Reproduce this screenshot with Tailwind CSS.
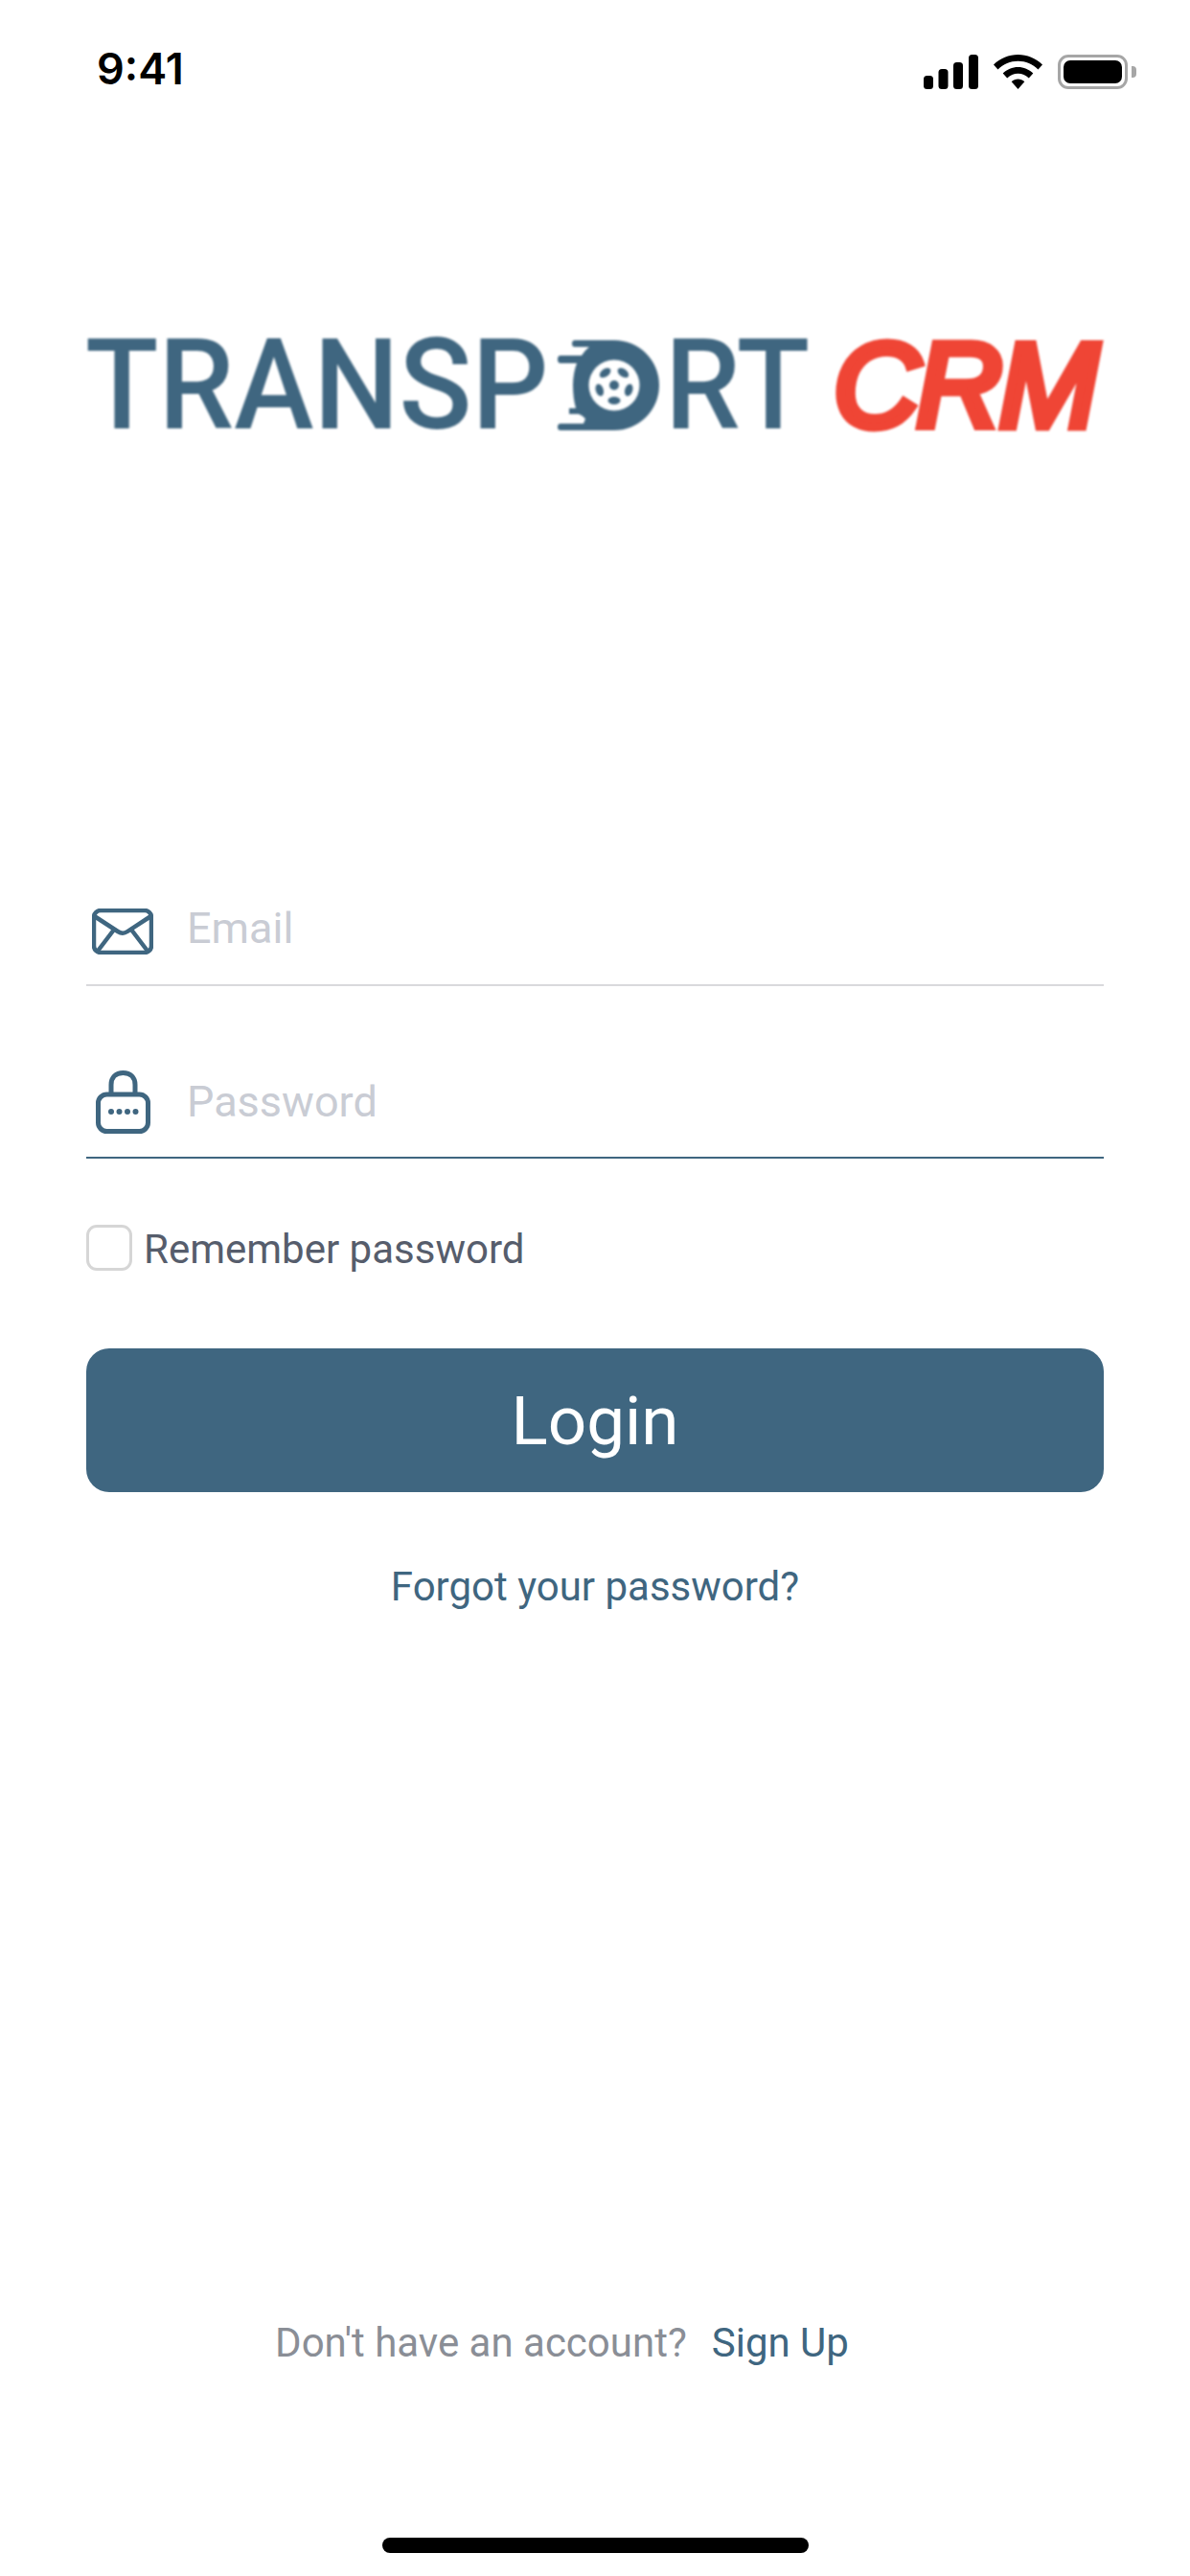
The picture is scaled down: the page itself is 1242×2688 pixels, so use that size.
<!DOCTYPE html>
<html lang="en">
<head>
    <meta charset="UTF-8">
    <meta name="viewport" content="width=device-width, initial-scale=1.0">
    <title>Transport CRM Login</title>
    <script src="https://cdn.jsdelivr.net/npm/@tailwindcss/browser@4"></script>
</head>
<body class="bg-white">
    <div class="w-[1242px] h-[2688px] flex flex-col font-['Roboto',sans-serif] overflow-hidden">

        <!-- Status bar -->
        <div class="h-[110px] flex items-start justify-between pl-[101px] pr-[56px] pt-[45px]">
            <span class="pt-[1px] text-[45px] leading-[52px] font-semibold text-black font-['Inter',sans-serif]">9:41</span>
            <div class="flex items-center gap-[16px] pt-[12px]">
                <svg width="57" height="36" viewBox="0 0 57 36" fill="#000">
                    <rect x="0" y="22" width="10" height="14" rx="3.500"/>
                    <rect x="15.500" y="15" width="10" height="21" rx="3.500"/>
                    <rect x="31" y="8" width="10" height="28" rx="3.500"/>
                    <rect x="47" y="0" width="10" height="36" rx="3.500"/>
                </svg>
                <svg width="51" height="36" viewBox="0 0 51 36" fill="#000">
                    <path d="M25.500 0C35 0 44 3.800 51 10.500L46.500 15.500C40.800 10 33.500 6.800 25.500 6.800C17.500 6.800 10.200 10 4.500 15.500L0 10.500C7 3.800 16 0 25.500 0Z"/>
                    <path d="M25.500 13C31.500 13 37 15.400 41.300 19.500L36.800 24.500C33.700 21.600 29.800 19.800 25.500 19.800C21.200 19.800 17.300 21.600 14.200 24.500L9.700 19.500C14 15.400 19.500 13 25.500 13Z"/>
                    <path d="M25.500 25.500C28 25.500 30.400 26.500 32.300 28.200L25.500 36L18.700 28.200C20.600 26.500 23 25.500 25.500 25.500Z"/>
                </svg>
                <div class="flex items-center">
                    <div class="w-[73px] h-[36px] rounded-[11px] border-[3px] border-[#a6a6a6] p-[3px]">
                        <div class="w-full h-full rounded-[7px] bg-black"></div>
                    </div>
                    <div class="ml-[4px] w-[5px] h-[12px] rounded-r-[4px] bg-[#a6a6a6]"></div>
                </div>
            </div>
        </div>

        <!-- Logo -->
        <div class="mt-[245px] ml-[89px] h-[94px] flex items-center blur-[1px]">
            <div class="w-[481px] h-[94px] flex items-center">
                <span class="origin-left scale-x-[.95] text-[132px] leading-[94px] font-medium text-[#3f6680] whitespace-nowrap">TRANSP</span>
            </div>
            <svg class="ml-[12px]" width="106" height="94" viewBox="0 0 106 94">
                <path fill="#3f6680" d="M18 0H59A47 47 0 0 1 59 94H3Q0 94 0 90.500Q0 87 3 87H27L29 82Q27 79 22 77H12V71H19Q16 60 16 47Q16 35 20 24H3Q0 24 0 20Q0 16 3 16H25Q29 10 33 7H18Q15 7 15 3.500Q15 0 18 0Z"/>
                <circle cx="59" cy="47" r="26.500" fill="#fff"/>
                <circle cx="59" cy="47" r="5" fill="#3f6680"/>
                <g fill="#3f6680">
                    <ellipse cx="59" cy="63" rx="6.500" ry="4"/>
                    <ellipse cx="59" cy="63" rx="6.500" ry="4" transform="rotate(72 59 47)"/>
                    <ellipse cx="59" cy="63" rx="6.500" ry="4" transform="rotate(144 59 47)"/>
                    <ellipse cx="59" cy="63" rx="6.500" ry="4" transform="rotate(216 59 47)"/>
                    <ellipse cx="59" cy="63" rx="6.500" ry="4" transform="rotate(288 59 47)"/>
                </g>
            </svg>
            <div class="ml-[6px] w-[143px] h-[94px] flex items-center">
                <span class="origin-left scale-x-[.95] text-[132px] leading-[94px] font-medium text-[#3f6680] whitespace-nowrap">RT</span>
            </div>
            <div class="ml-[33px] h-[94px] flex items-center font-['Liberation_Sans',sans-serif] italic font-normal text-[124px] leading-[94px] text-[#ef4535] tracking-[-3px] [-webkit-text-stroke:9px_#ef4535] [stroke-linejoin:round]">CRM</div>
        </div>

        <!-- Email -->
        <div class="mt-[480px] mx-[90px] h-[100px] border-b-2 border-[#d9d9dc] flex items-center">
            <svg class="ml-[6px] mb-[12px]" width="64" height="48" viewBox="0 0 64 48" fill="none" stroke="#3f6680" stroke-width="4.500" stroke-linecap="round" stroke-linejoin="round">
                <rect x="2" y="2" width="60" height="44" rx="7"/>
                <path d="M4 9L27 24C30 26 34 26 37 24L60 9"/>
                <path d="M7 43L23 22M57 43L41 22"/>
            </svg>
            <input type="text" placeholder="Email" class="ml-[35px] mb-[18px] flex-1 bg-transparent outline-none text-[45px] leading-[52px] placeholder:text-[#c9ccd4]">
        </div>

        <!-- Password -->
        <div class="mt-[80px] mx-[90px] h-[100px] border-b-2 border-[#3f6680] flex items-center">
            <svg class="ml-[10px] mb-[16px]" width="57" height="66" viewBox="0 0 57 66" fill="none" stroke="#3f6680" stroke-width="5" stroke-linecap="round" stroke-linejoin="round">
                <rect x="2.500" y="25" width="52" height="38.500" rx="9"/>
                <path d="M16 24V15C16 7 21 2.500 28.500 2.500C36 2.500 41 7 41 15V24"/>
                <g fill="#3f6680" stroke="none">
                    <circle cx="16" cy="43" r="3"/>
                    <circle cx="24.500" cy="43" r="3"/>
                    <circle cx="33" cy="43" r="3"/>
                    <circle cx="41.500" cy="43" r="3"/>
                </g>
            </svg>
            <input type="password" placeholder="Password" class="ml-[38px] mb-[16px] flex-1 bg-transparent outline-none text-[45px] leading-[52px] placeholder:text-[#c9ccd4]">
        </div>

        <!-- Remember -->
        <label class="mt-[69px] ml-[90px] h-[48px] flex items-center">
            <input type="checkbox" class="appearance-none w-[48px] h-[48px] rounded-[11px] border-[3px] border-[#d6d6d6] bg-white">
            <span class="ml-[12px] pt-[4px] text-[42px] leading-[48px] text-[#565d6c]">Remember password</span>
        </label>

        <!-- Login -->
        <button class="mt-[81px] mx-[90px] h-[150px] pt-[3px] rounded-[24px] bg-[#3f6680] text-white text-[71px]">Login</button>

        <div class="mt-[74px] h-[50px] text-center text-[42px] leading-[50px] text-[#3f6680]">Forgot your password?</div>

        <!-- Sign up -->
        <div class="mt-auto h-[50px] pr-[69px] flex items-center justify-center text-[42px] leading-[50px]">
            <span class="text-[#8a8e96]">Don't have an account?</span>
            <span class="ml-[26px] text-[#3f6680]">Sign Up</span>
        </div>

        <!-- Home indicator -->
        <div class="mt-[178px] mb-[24px] mx-auto w-[445px] h-[16px] rounded-full bg-black"></div>
    </div>
</body>
</html>
